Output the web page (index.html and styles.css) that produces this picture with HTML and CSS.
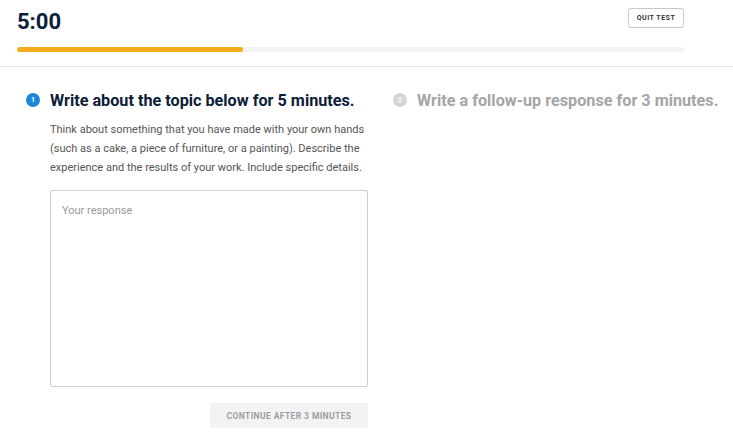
FILE: index.html
```html
<!DOCTYPE html>
<html>
<head>
<meta charset="utf-8">
<link rel="stylesheet" href="styles.css">
</head>
<body>
<header class="top">
  <div class="top-row">
    <div class="timer">5:00</div>
    <button class="quit">QUIT TEST</button>
  </div>
  <div class="progress"><div class="progress-fill"></div></div>
</header>
<main class="steps">
  <section class="step step-active">
    <h2 class="step-title"><span class="num num-active">1</span>Write about the topic below for 5 minutes.</h2>
    <div class="step-body">
      <p class="prompt">Think about something that you have made with your own hands (such as a cake, a piece of furniture, or a painting). Describe the experience and the results of your work. Include specific details.</p>
      <textarea class="response" placeholder="Your response"></textarea>
      <div class="actions"><button class="continue">CONTINUE AFTER 3 MINUTES</button></div>
    </div>
  </section>
  <section class="step step-next">
    <h2 class="step-title muted"><span class="num num-muted">2</span>Write a follow-up response for 3 minutes.</h2>
  </section>
</main>
</body>
</html>
```
FILE: styles.css
```css
html, body {
  margin: 0;
  padding: 0;
  background: #fff;
  font-family: Roboto, "Liberation Sans", sans-serif;
}
.top {
  padding: 8px 49px 0 17px;
  border-bottom: 1px solid #e6e6e6;
  height: 58px;
}
.top-row {
  display: flex;
  justify-content: space-between;
  align-items: flex-start;
  height: 39px;
}
.timer {
  font-size: 22px;
  font-weight: 700;
  color: #0b1d38;
  line-height: 22px;
  margin-top: 3px;
}
.quit {
  width: 56px;
  height: 20px;
  border: 1px solid #c8c8c8;
  border-radius: 3px;
  background: #fff;
  font-family: Roboto, sans-serif;
  font-size: 7px;
  font-weight: 700;
  letter-spacing: 0.5px;
  color: #333;
  padding: 0;
}
.progress {
  height: 5px;
  background: #f3f3f3;
  border-radius: 3px;
  overflow: hidden;
}
.progress-fill {
  width: 226px;
  height: 100%;
  background: #f5ac1a;
  border-radius: 3px;
}
.steps {
  display: flex;
  padding: 24px 0 0 26px;
  gap: 25px;
}
.step-active {
  width: 342px;
}
.step-title {
  display: flex;
  align-items: center;
  margin: 0;
  font-size: 16.2px;
  font-weight: 700;
  color: #0b1d38;
  height: 18px;
  white-space: nowrap;
}
.step-title.muted {
  color: #a5a5a5;
}
.num {
  width: 14px;
  height: 14px;
  border-radius: 50%;
  display: inline-flex;
  align-items: center;
  justify-content: center;
  font-size: 7px;
  font-weight: 700;
  color: #fff;
  margin-right: 10px;
  flex: none;
}
.num-active { background: #1c86d9; }
.num-muted { background: #d5d5d5; }
.step-body {
  padding-left: 24px;
}
.prompt {
  margin: 11px 0 0;
  width: 330px;
  font-size: 11px;
  line-height: 19px;
  color: #555;
}
.response {
  display: block;
  box-sizing: border-box;
  width: 318px;
  height: 197px;
  margin-top: 13px;
  border: 1px solid #cfcfcf;
  border-radius: 2px;
  padding: 13px 11px;
  font-family: Roboto, sans-serif;
  font-size: 11px;
  resize: none;
  outline: none;
}
.response::placeholder { color: #9a9a9a; }
.actions {
  display: flex;
  justify-content: flex-end;
  width: 318px;
  margin-top: 16px;
}
.continue {
  width: 158px;
  height: 25px;
  border: none;
  border-radius: 2px;
  background: #f1f3f4;
  color: #9e9e9e;
  font-family: Roboto, sans-serif;
  font-size: 8.5px;
  font-weight: 700;
  letter-spacing: 0.4px;
  padding: 0;
}
```
